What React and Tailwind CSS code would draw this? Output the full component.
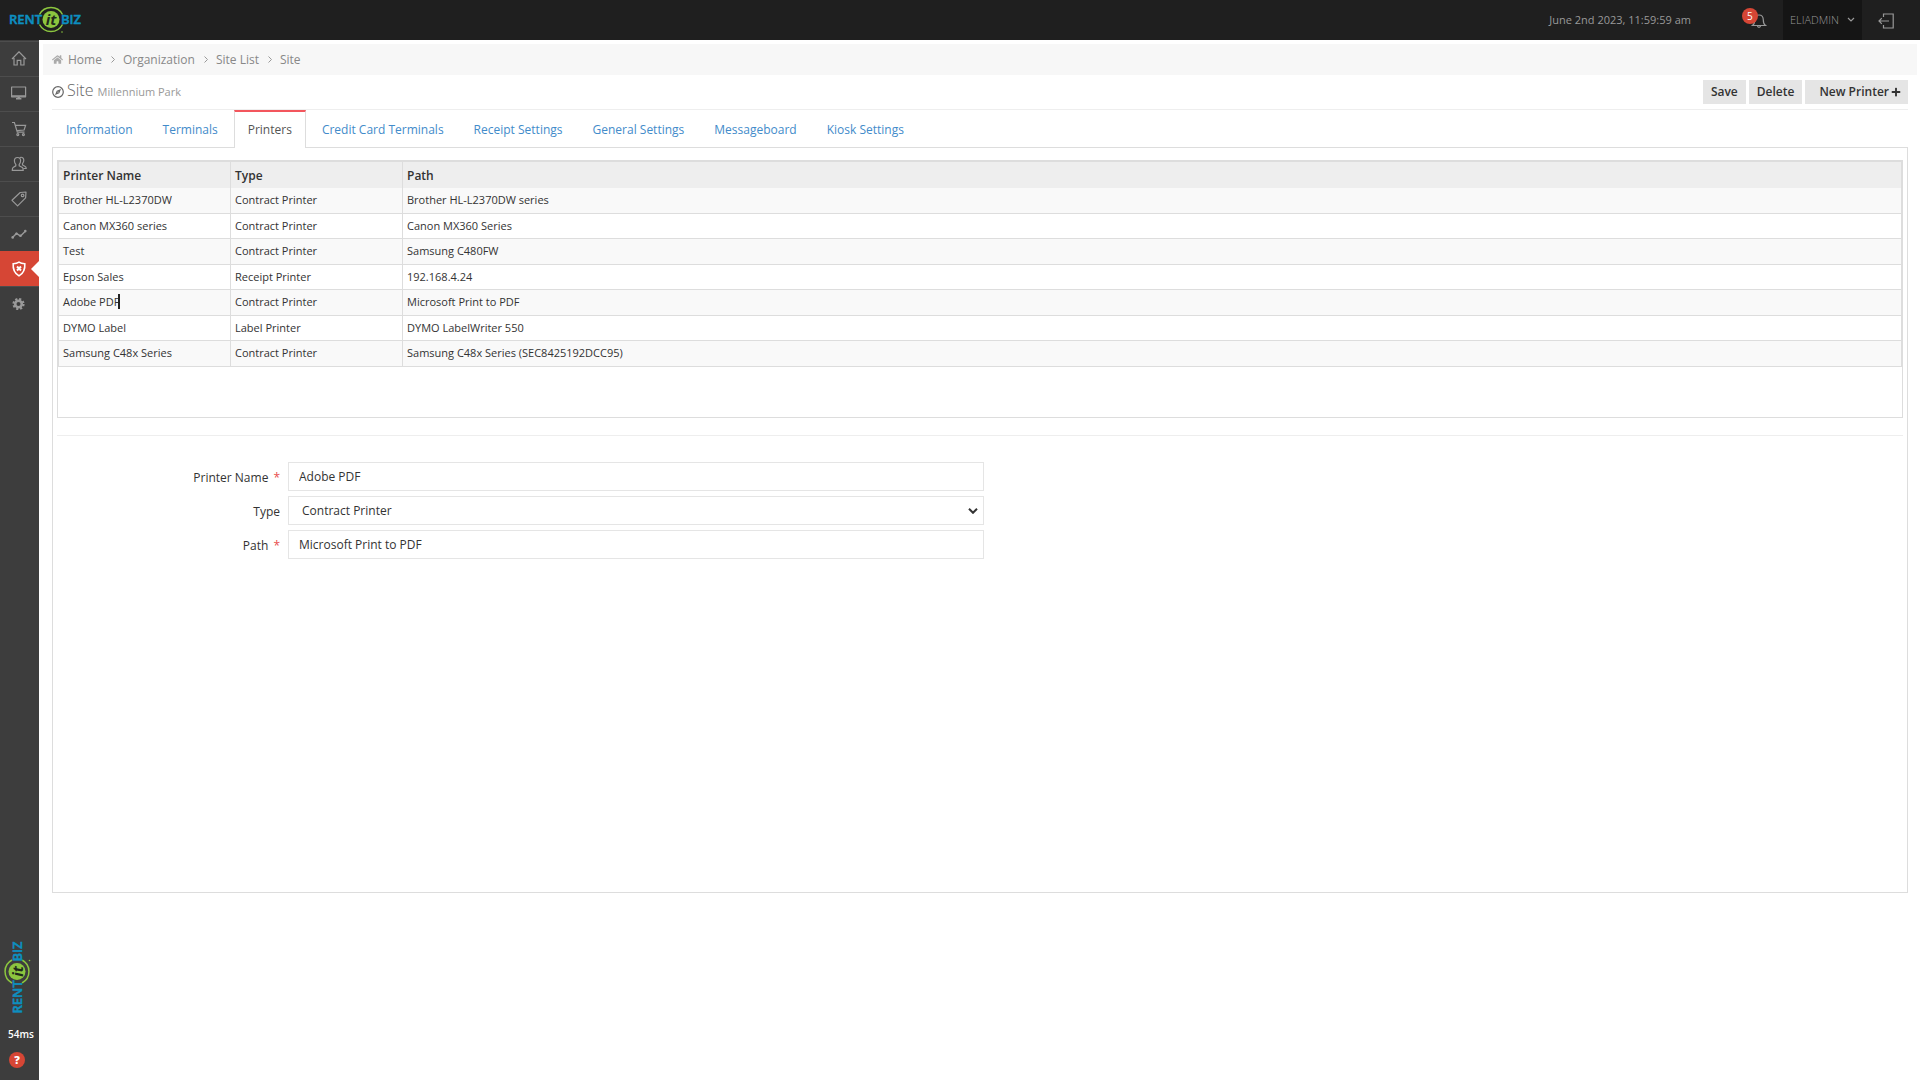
import { useState } from 'react';
import { FaHome, FaPlus } from 'react-icons/fa';

const TABS = [
  'Information',
  'Terminals',
  'Printers',
  'Credit Card Terminals',
  'Receipt Settings',
  'General Settings',
  'Messageboard',
  'Kiosk Settings',
];

const PRINTERS = [
  { name: 'Brother HL-L2370DW', type: 'Contract Printer', path: 'Brother HL-L2370DW series' },
  { name: 'Canon MX360 series', type: 'Contract Printer', path: 'Canon MX360 Series' },
  { name: 'Test', type: 'Contract Printer', path: 'Samsung C480FW' },
  { name: 'Epson Sales', type: 'Receipt Printer', path: '192.168.4.24' },
  { name: 'Adobe PDF', type: 'Contract Printer', path: 'Microsoft Print to PDF' },
  { name: 'DYMO Label', type: 'Label Printer', path: 'DYMO LabelWriter 550' },
  { name: 'Samsung C48x Series', type: 'Contract Printer', path: 'Samsung C48x Series (SEC8425192DCC95)' },
];

function Icon({ children, className = '' }) {
  return (
    <svg viewBox="0 0 16 16" fill="none" stroke="currentColor" strokeWidth="1.2" className={`w-4 h-4 ${className}`}>
      {children}
    </svg>
  );
}

const NAV = [
  {
    label: 'Dashboard',
    icon: <Icon><path d="M1 8 8 .8 15 8M3 7v7h3.2V9.300h3.600V14H13V7" /></Icon>,
  },
  {
    label: 'Point of sale',
    icon: (
      <Icon>
        <path d="M.6 1h14v9.8H.6z" strokeLinejoin="round" />
        <path d="M.6 10h14M6.5 11.800h2.400M5 12.800h5.400" strokeWidth="1.6" />
      </Icon>
    ),
  },
  {
    label: 'Orders',
    icon: (
      <Icon>
        <path d="M1 1.5h2.4l2.9 9.7h7.2M4.4 4.4h10.2l-1.5 4.6-7.3.6" />
        <circle cx="6.8" cy="13.6" r="1" />
        <circle cx="12.4" cy="13.6" r="1" />
      </Icon>
    ),
  },
  {
    label: 'Customers',
    icon: (
      <Icon>
        <path d="M6.5 1.5c2 0 3.1 1.3 3.1 3.3 0 1.5-.6 2.7-1.4 3.5v1.5l3.2 1.6c.6.4.8 1 .8 2.9H1.3c0-1.9.2-2.5.8-2.9l2.7-1.6V8.3C4 7.5 3.4 6.3 3.4 4.8c0-2 1.1-3.3 3.1-3.3z" />
        <path d="M8.8 1.6c2.3-1 4 .5 4 2.7 0 1.4-.5 2.5-1.3 3.3V9l2.700 1.400c.8.5 1 .8 1 2.100h-2.800" />
      </Icon>
    ),
  },
  {
    label: 'Inventory',
    icon: (
      <Icon>
        <path d="M9.2 1.5 15 1l-.4 5.9-8 8L1 9.3z" strokeLinejoin="round" />
        <circle cx="11.6" cy="4.4" r="1.3" />
      </Icon>
    ),
  },
  {
    label: 'Reports',
    icon: (
      <Icon>
        <path d="m1.5 11.5 4-4 4 2.5 5-5" strokeWidth="1.4" />
        <g fill="currentColor" stroke="none">
          <circle cx="1.7" cy="11.4" r="1.3" />
          <circle cx="5.5" cy="7.7" r="1.3" />
          <circle cx="9.5" cy="9.8" r="1.3" />
          <circle cx="14.3" cy="5.1" r="1.3" />
        </g>
      </Icon>
    ),
  },
  {
    label: 'Organization',
    active: true,
    icon: (
      <Icon>
        <path d="M8 1.2c1.6 1.1 3.6 1.5 5.8 1.5.4 5.3-1.3 9.6-5.8 12.2C3.5 12.3 1.8 8 2.2 2.7 4.4 2.7 6.4 2.3 8 1.2z" strokeWidth="1.6" />
        <path d="m6 5.5 4 4M10 5.5l-4 4" strokeWidth="2" />
      </Icon>
    ),
  },
  {
    label: 'Settings',
    icon: (
      <Icon>
        <circle cx="7.5" cy="8" r="3.3" strokeWidth="2.6" />
        <circle cx="7.5" cy="8" r="5" strokeWidth="2.2" strokeDasharray="2.13 1.8" />
      </Icon>
    ),
  },
];

function Logo({ className = '' }) {
  return (
    <svg viewBox="0 0 73 30" className={`w-[73px] h-[30px] ${className}`} role="img" aria-label="RentItBiz">
      <g fill="none" stroke="#8cc63f" strokeWidth="1.5">
        <path d="M30.5 9.5a13 13 0 0 1 23 0" />
        <path d="M30.5 19.5a13 13 0 0 0 23 0" />
      </g>
      <circle cx="42" cy="14.5" r="8.5" fill="#8cc63f" />
      <circle cx="53" cy="27" r="0.8" fill="#8cc63f" />
      <g fontFamily="Open Sans, sans-serif" fontSize="13" fontWeight="600" fill="#0d8fc0" stroke="#0d8fc0" strokeWidth="0.5">
        <text x="0" y="19">RENT</text>
        <text x="52" y="19">BIZ</text>
      </g>
      <text x="42" y="20" textAnchor="middle" fontFamily="Open Sans, sans-serif" fontSize="15" fontWeight="700" fontStyle="italic" fill="#1f2a1a">
        it
      </text>
    </svg>
  );
}

function Header() {
  return (
    <header className="h-10 bg-[#1f1f1f] flex items-center text-[#999]">
      <a href="#" className="ml-[9px]"><Logo /></a>
      <div className="ml-auto flex items-center h-full text-[11px]">
        <span>June 2nd 2023, 11:59:59 am</span>
        <button aria-label="Notifications" className="relative ml-[60px] mr-4">
          <Icon className="mt-[2px]">
            <path d="M1.5 12.5h13c-1.7-1-2.2-2.3-2.2-5.5C12.3 4 11 2 8 2S3.7 4 3.7 7c0 3.2-.5 4.5-2.2 5.5zM6.5 13c.2 1.7 2.8 1.7 3 0" />
          </Icon>
          <span className="absolute -left-[9px] -top-[3px] w-4 h-4 rounded-full bg-[#d64635] text-white text-[10px] leading-4 text-center">5</span>
        </button>
        <button className="h-full bg-[#151515] px-[7px] flex items-center gap-2 font-light">
          ELIADMIN
          <svg viewBox="0 0 8 6" className="w-2 h-[6px]" fill="none" stroke="currentColor" strokeWidth="1.2">
            <path d="m1 1 3 3 3-3" />
          </svg>
        </button>
        <button aria-label="Log out" className="ml-4 mr-[26px]">
          <Icon className="mt-[2px]">
            <path d="M5.5 4V1h9.7v14H5.5v-3M11 8H1M3.8 5.2 1 8l2.8 2.8" />
          </Icon>
        </button>
      </div>
    </header>
  );
}

function Sidebar() {
  return (
    <aside className="w-[39px] shrink-0 bg-[#3d3d3d] flex flex-col pt-px">
      <nav>
        {NAV.map((item) => (
          <a
            key={item.label}
            href="#"
            aria-label={item.label}
            className={`relative h-[35px] pl-[11px] flex items-center border-t ${
              item.active ? 'bg-[#d64635] border-[#d64635] text-white' : 'border-[#4d4d4d] text-[#999]'
            }`}
          >
            {item.icon}
            {item.active && (
              <span className="absolute right-0 top-[9px] border-y-8 border-r-8 border-y-transparent border-r-white" />
            )}
          </a>
        ))}
      </nav>
      <div className="mt-auto pb-3 flex flex-col">
        <div className="h-[73px] w-[30px] ml-[2px] flex items-center justify-center">
          <Logo className="-rotate-90 shrink-0" />
        </div>
        <span className="mt-[13px] ml-2 text-[10px] leading-4 font-semibold text-white">54ms</span>
        <button aria-label="Help" className="mt-[10px] ml-[9px] w-4 h-4 rounded-full bg-[#d64635] text-white text-[11px] leading-4 font-extrabold">
          ?
        </button>
      </div>
    </aside>
  );
}

function Breadcrumb() {
  return (
    <nav className="mt-1 ml-1 mr-[3px] h-[31px] bg-[#f7f7f7] flex items-center pl-[9px] text-[#888]">
      <FaHome className="w-[11px] h-[11px] text-[#aaa] mr-[5px]" />
      {['Home', 'Organization', 'Site List', 'Site'].map((crumb, i) => (
        <span key={crumb} className="flex items-center">
          {i > 0 && (
            <svg viewBox="0 0 4 7" className="w-1 h-[7px] ml-[9px] mr-2" fill="none" stroke="#999">
              <path d="m.5.5 3 3-3 3" />
            </svg>
          )}
          <a href="#">{crumb}</a>
        </span>
      ))}
    </nav>
  );
}

function Field({ id, label, required, children }) {
  return (
    <div className="flex items-center">
      <label htmlFor={id} className="w-[231px] shrink-0 pr-2 pt-[2px] text-right">
        {label}
        {required && <span className="text-[#e84c4c] ml-[5px]">*</span>}
      </label>
      {children}
    </div>
  );
}

const inputClass = 'flex-1 min-w-0 h-[29px] border border-[#e5e5e5] bg-white px-[10px] outline-none';

export default function App() {
  const [tab, setTab] = useState('Printers');
  const [selected, setSelected] = useState(4);
  const [form, setForm] = useState(PRINTERS[4]);

  const pick = (i) => {
    setSelected(i);
    setForm(PRINTERS[i]);
  };
  const update = (key) => (e) => setForm({ ...form, [key]: e.target.value });

  return (
    <div className="min-h-screen flex flex-col bg-white text-xs text-[#333] font-['Open_Sans',sans-serif]">
      <Header />
      <div className="flex-1 flex">
        <Sidebar />
        <main className="flex-1 min-w-0">
          <Breadcrumb />
          <div className="ml-[13px] mr-3">
            {/* Title */}
            <div className="h-[35px] flex items-center border-b border-[#eee]">
              <svg viewBox="0 0 12 12" className="w-3 h-3 mr-[3px]" fill="none" stroke="#666">
                <circle cx="6" cy="6" r="5.3" strokeWidth="1.2" />
                <path d="M9 3 7.3 7.3 3 9l1.7-4.3z" fill="#666" stroke="none" />
                <circle cx="6" cy="6" r=".6" fill="#fff" stroke="none" />
              </svg>
              <h1 className="flex items-baseline gap-1 pb-[3px] text-base leading-5 font-light text-[#666]">
                Site
                <small className="text-[11px] font-normal text-[#999]">Millennium Park</small>
              </h1>
              <div className="ml-auto flex gap-[3px] font-semibold">
                <button className="h-6 px-2 bg-[#e5e5e5]">Save</button>
                <button className="h-6 px-2 bg-[#e5e5e5]">Delete</button>
                <button className="h-6 pl-[14px] pr-[7px] bg-[#e5e5e5] flex items-center gap-[2px]">
                  New Printer
                  <FaPlus className="w-[10px] h-[10px]" />
                </button>
              </div>
            </div>

            {/* Tabs */}
            <div role="tablist" className="flex gap-[2px]">
              {TABS.map((t) => (
                <button
                  key={t}
                  role="tab"
                  aria-selected={tab === t}
                  onClick={() => setTab(t)}
                  className={`h-[38px] -mb-px px-[13px] border-x border-t-2 ${
                    tab === t
                      ? 'border-x-[#ddd] border-t-[#f3565d] bg-white text-[#555]'
                      : 'border-transparent text-[#428bca]'
                  }`}
                >
                  {t}
                </button>
              ))}
            </div>

            <section className="border border-[#ddd] min-h-[746px] px-1 pt-3">
              <div className="border border-[#ddd] min-h-[258px]">
                <table className="w-full table-fixed border-separate border-spacing-0 border-t border-x border-[#ddd] text-[11px] text-left">
                  <thead>
                    <tr className="h-[26px] bg-[#eee] text-xs">
                      <th className="w-[172px] px-1 pt-[2px] font-semibold border-r border-[#ddd]">Printer Name</th>
                      <th className="w-[172px] px-1 pt-[2px] font-semibold border-r border-[#ddd]">Type</th>
                      <th className="px-1 pt-[2px] font-semibold">Path</th>
                    </tr>
                  </thead>
                  <tbody>
                    {PRINTERS.map((p, i) => (
                      <tr key={p.name} onClick={() => pick(i)} className="h-[25px] odd:h-[26px] odd:bg-[#f9f9f9]">
                        <td className="px-1 border-r border-b border-[#ddd]">
                          <span className="relative">
                            {p.name}
                            {i === selected && <span className="absolute -right-px top-0 w-[2px] h-[15px] bg-[#222]" />}
                          </span>
                        </td>
                        <td className="px-1 border-r border-b border-[#ddd]">{p.type}</td>
                        <td className="px-1 border-b border-[#ddd]">{p.path}</td>
                      </tr>
                    ))}
                  </tbody>
                </table>
              </div>
              <hr className="mt-[17px] border-[#eee]" />

              <form className="mt-[26px] max-w-[927px] flex flex-col gap-[5px]">
                <Field id="name" label="Printer Name" required>
                  <input id="name" className={inputClass} value={form.name} onChange={update('name')} />
                </Field>
                <Field id="type" label="Type">
                  <div className="relative flex-1 flex">
                    <select
                      id="type"
                      className="flex-1 h-[29px] border border-[#e5e5e5] bg-white px-[13px] outline-none appearance-none"
                      value={form.type}
                      onChange={update('type')}
                    >
                      <option>Contract Printer</option>
                      <option>Receipt Printer</option>
                      <option>Label Printer</option>
                    </select>
                    <svg viewBox="0 0 10 6" className="absolute right-[6px] top-3 w-[10px] h-[6px] pointer-events-none" fill="none" stroke="#333" strokeWidth="2">
                      <path d="m1 .8 4 4 4-4" />
                    </svg>
                  </div>
                </Field>
                <Field id="path" label="Path" required>
                  <input id="path" className={inputClass} value={form.path} onChange={update('path')} />
                </Field>
              </form>
            </section>
          </div>
        </main>
      </div>
    </div>
  );
}
